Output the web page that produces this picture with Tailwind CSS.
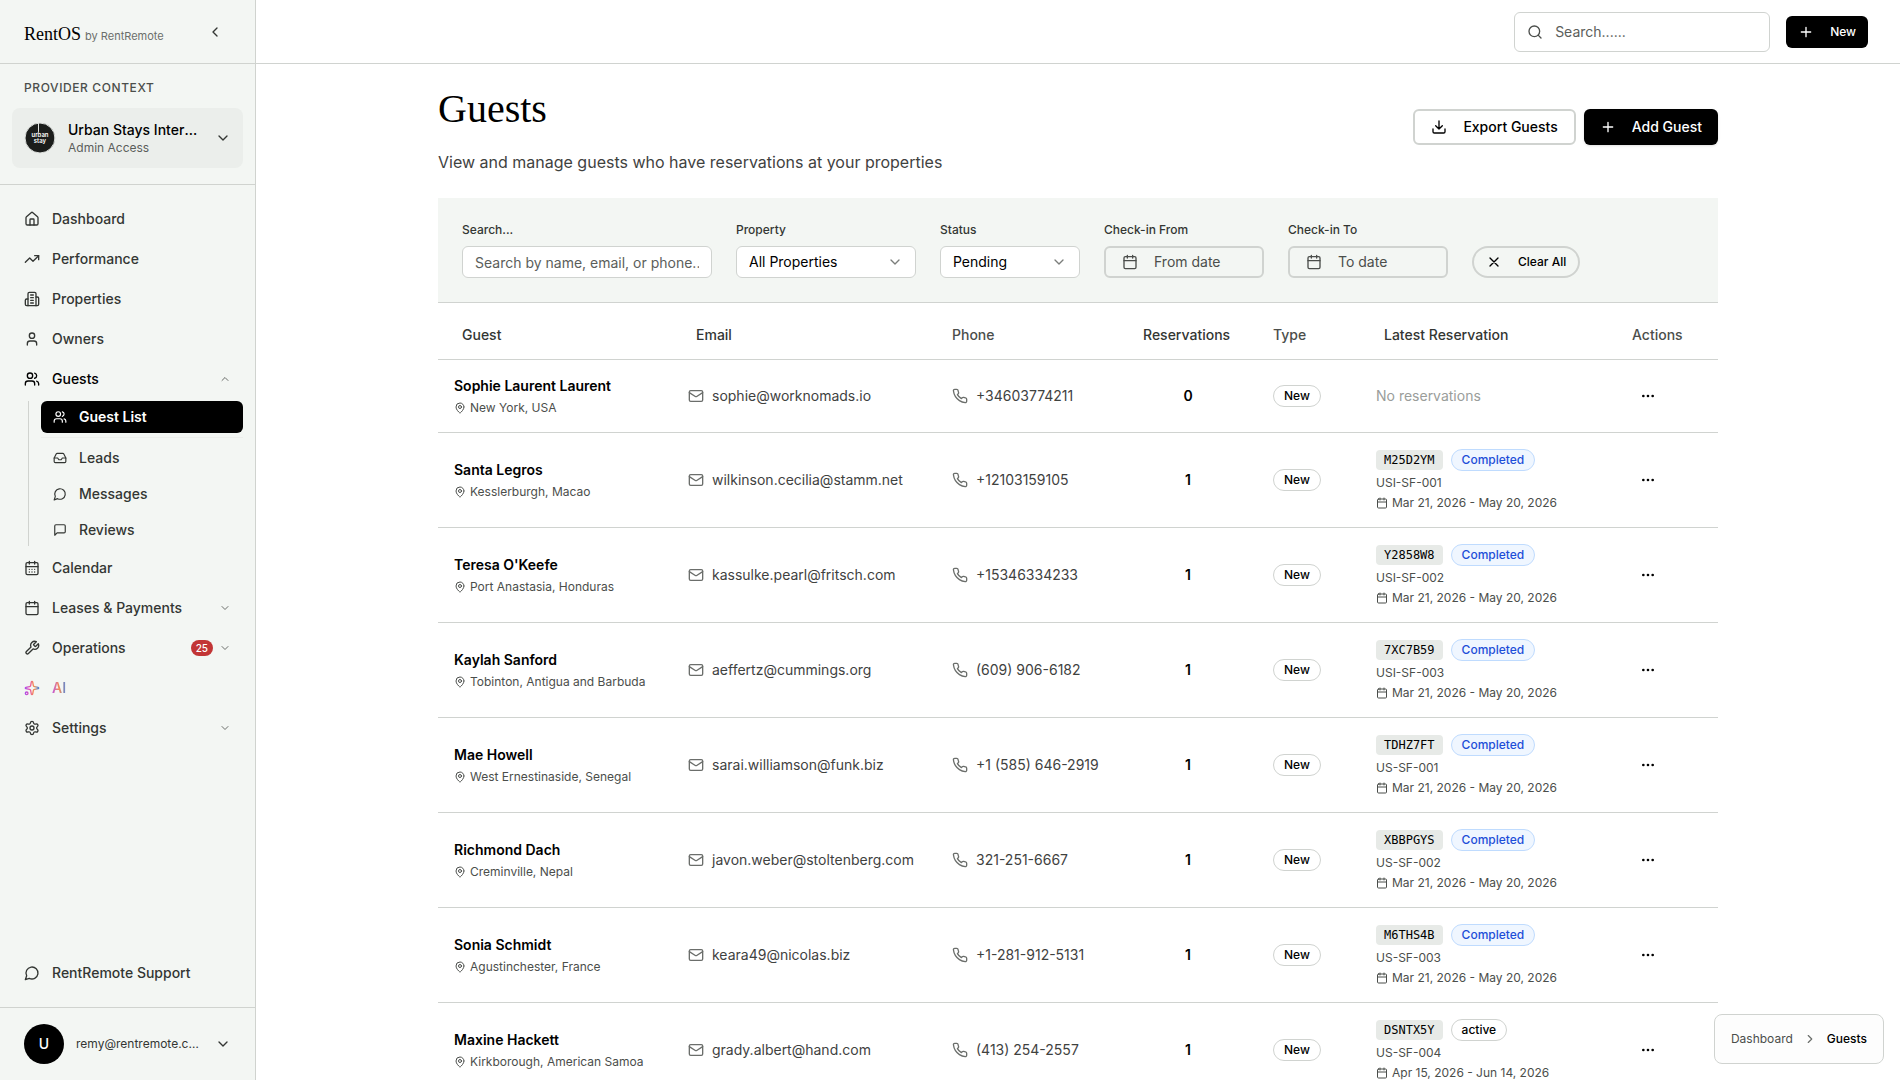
<!DOCTYPE html>
<html lang="en">
<head>
  <meta charset="UTF-8" />
  <meta name="viewport" content="width=device-width, initial-scale=1.0" />
  <title>Guests – RentOS</title>
  <script src="https://cdn.jsdelivr.net/npm/@tailwindcss/browser@4"></script>
</head>
<body class="flex h-screen overflow-hidden bg-white font-['Inter',sans-serif] text-sm text-black [stroke-linecap:round] [stroke-linejoin:round]">

  <!-- Icon sprite -->
  <svg class="hidden" xmlns="http://www.w3.org/2000/svg">
    <symbol id="chevron-left" viewBox="0 0 24 24"><path d="m15 18-6-6 6-6" /></symbol>
    <symbol id="chevron-right" viewBox="0 0 24 24"><path d="m9 18 6-6-6-6" /></symbol>
    <symbol id="chevron-down" viewBox="0 0 24 24"><path d="m6 9 6 6 6-6" /></symbol>
    <symbol id="chevron-up" viewBox="0 0 24 24"><path d="m18 15-6-6-6 6" /></symbol>
    <symbol id="house" viewBox="0 0 24 24"><path d="M15 21v-8a1 1 0 0 0-1-1h-4a1 1 0 0 0-1 1v8" /><path d="M3 10a2 2 0 0 1 .709-1.528l7-5.999a2 2 0 0 1 2.582 0l7 5.999A2 2 0 0 1 21 10v9a2 2 0 0 1-2 2H5a2 2 0 0 1-2-2z" /></symbol>
    <symbol id="trending-up" viewBox="0 0 24 24"><path d="M22 7l-8.5 8.5-5-5L2 17" /><path d="M16 7h6v6" /></symbol>
    <symbol id="building" viewBox="0 0 24 24"><path d="M6 22V4a2 2 0 0 1 2-2h8a2 2 0 0 1 2 2v18Z" /><path d="M6 12H4a2 2 0 0 0-2 2v6a2 2 0 0 0 2 2h2" /><path d="M18 9h2a2 2 0 0 1 2 2v9a2 2 0 0 1-2 2h-2" /><path d="M10 6h4M10 10h4M10 14h4M10 18h4" /></symbol>
    <symbol id="user" viewBox="0 0 24 24"><path d="M19 21v-2a4 4 0 0 0-4-4H9a4 4 0 0 0-4 4v2" /><circle cx="12" cy="7" r="4" /></symbol>
    <symbol id="users" viewBox="0 0 24 24"><path d="M16 21v-2a4 4 0 0 0-4-4H6a4 4 0 0 0-4 4v2" /><circle cx="9" cy="7" r="4" /><path d="M22 21v-2a4 4 0 0 0-3-3.87" /><path d="M16 3.13a4 4 0 0 1 0 7.75" /></symbol>
    <symbol id="inbox" viewBox="0 0 24 24"><path d="M22 12h-6l-2 3h-4l-2-3H2" /><path d="M5.45 5.11 2 12v6a2 2 0 0 0 2 2h16a2 2 0 0 0 2-2v-6l-3.45-6.89A2 2 0 0 0 16.76 4H7.24a2 2 0 0 0-1.79 1.11z" /></symbol>
    <symbol id="message-circle" viewBox="0 0 24 24"><path d="M7.9 20A9 9 0 1 0 4 16.1L2 22Z" /></symbol>
    <symbol id="message-square" viewBox="0 0 24 24"><path d="M21 15a2 2 0 0 1-2 2H7l-4 4V5a2 2 0 0 1 2-2h14a2 2 0 0 1 2 2z" /></symbol>
    <symbol id="calendar" viewBox="0 0 24 24"><path d="M8 2v4M16 2v4" /><rect width="18" height="18" x="3" y="4" rx="2" /><path d="M3 10h18" /></symbol>
    <symbol id="calendar-days" viewBox="0 0 24 24"><path d="M8 2v4M16 2v4" /><rect width="18" height="18" x="3" y="4" rx="2" /><path d="M3 10h18M8 14h.01M12 14h.01M16 14h.01M8 18h.01M12 18h.01M16 18h.01" /></symbol>
    <symbol id="wrench" viewBox="0 0 24 24"><path d="M14.7 6.3a1 1 0 0 0 0 1.4l1.6 1.6a1 1 0 0 0 1.4 0l3.77-3.77a6 6 0 0 1-7.94 7.94l-6.91 6.91a2.12 2.12 0 0 1-3-3l6.91-6.91a6 6 0 0 1 7.94-7.94l-3.76 3.76z" /></symbol>
    <symbol id="settings" viewBox="0 0 24 24"><path d="M9.671 4.136a2.34 2.34 0 0 1 4.659 0 2.34 2.34 0 0 0 3.319 1.915 2.34 2.34 0 0 1 2.33 4.033 2.34 2.34 0 0 0 0 3.831 2.34 2.34 0 0 1-2.33 4.033 2.34 2.34 0 0 0-3.319 1.915 2.34 2.34 0 0 1-4.659 0 2.34 2.34 0 0 0-3.32-1.915 2.34 2.34 0 0 1-2.33-4.033 2.34 2.34 0 0 0 0-3.831A2.34 2.34 0 0 1 6.35 6.051a2.34 2.34 0 0 0 3.319-1.915" /><circle cx="12" cy="12" r="3" /></symbol>
    <symbol id="search" viewBox="0 0 24 24"><circle cx="11" cy="11" r="8" /><path d="m21 21-4.3-4.3" /></symbol>
    <symbol id="plus" viewBox="0 0 24 24"><path d="M5 12h14M12 5v14" /></symbol>
    <symbol id="x" viewBox="0 0 24 24"><path d="M18 6 6 18M6 6l12 12" /></symbol>
    <symbol id="download" viewBox="0 0 24 24"><path d="M21 15v4a2 2 0 0 1-2 2H5a2 2 0 0 1-2-2v-4" /><path d="m7 10 5 5 5-5M12 15V3" /></symbol>
    <symbol id="mail" viewBox="0 0 24 24"><rect width="20" height="16" x="2" y="4" rx="2" /><path d="m22 7-8.97 5.7a1.94 1.94 0 0 1-2.06 0L2 7" /></symbol>
    <symbol id="phone" viewBox="0 0 24 24"><path d="M22 16.92v3a2 2 0 0 1-2.18 2 19.79 19.79 0 0 1-8.63-3.07 19.5 19.5 0 0 1-6-6 19.79 19.79 0 0 1-3.07-8.67A2 2 0 0 1 4.11 2h3a2 2 0 0 1 2 1.72 12.84 12.84 0 0 0 .7 2.81 2 2 0 0 1-.45 2.11L8.09 9.91a16 16 0 0 0 6 6l1.27-1.27a2 2 0 0 1 2.11-.45 12.84 12.84 0 0 0 2.81.7A2 2 0 0 1 22 16.92z" /></symbol>
    <symbol id="map-pin" viewBox="0 0 24 24"><path d="M20 10c0 4.993-5.539 10.193-7.399 11.799a1 1 0 0 1-1.202 0C9.539 20.193 4 14.993 4 10a8 8 0 0 1 16 0" /><circle cx="12" cy="10" r="3" /></symbol>
    <symbol id="ellipsis" viewBox="0 0 24 24"><circle cx="5" cy="12" r="1" /><circle cx="12" cy="12" r="1" /><circle cx="19" cy="12" r="1" /></symbol>
  </svg>

  <!-- Sidebar -->
  <aside class="flex w-64 shrink-0 flex-col border-r border-[#d0d3cf] bg-[#f3f6f3] text-[#333633]">
    <div class="flex h-16 shrink-0 items-center justify-between border-b border-[#d0d3cf] px-6">
      <a href="#" class="flex items-baseline gap-1 pt-1">
        <span class="font-['Liberation_Serif',serif] text-lg text-black">RentOS</span>
        <span class="text-[11px] text-[#6b6e6b]">by RentRemote</span>
      </a>
      <button aria-label="Collapse sidebar" class="flex size-8 items-center justify-center">
        <svg class="size-4 fill-none stroke-current stroke-2"><use href="#chevron-left" /></svg>
      </button>
    </div>

    <div class="border-b border-[#d0d3cf] px-3 pt-4 pb-4">
      <p class="px-3 text-xs font-medium tracking-wider text-[#4b4e4b] uppercase">Provider Context</p>
      <button class="mt-3 flex h-15 w-full items-center gap-3 rounded-lg bg-[#ebeeeb] px-3 text-left">
        <svg class="size-8 shrink-0" viewBox="0 0 32 32">
          <circle cx="16" cy="16" r="15" fill="#1b1d1b" stroke="#dcdfdc" />
          <path d="M14.500 1.500v8" stroke="#e4e6e4" />
          <text x="16" y="15" fill="#fff" font-size="6" font-weight="600" text-anchor="middle">urban</text>
          <text x="16" y="21" fill="#fff" font-size="6" font-weight="600" text-anchor="middle">stay</text>
        </svg>
        <span class="flex min-w-0 flex-1 flex-col">
          <span class="truncate text-sm leading-5 font-medium text-black">Urban Stays International</span>
          <span class="text-xs text-[#5b5e5b]">Admin Access</span>
        </span>
        <svg class="size-4 shrink-0 fill-none stroke-current stroke-2"><use href="#chevron-down" /></svg>
      </button>
    </div>

    <nav class="flex flex-1 flex-col gap-1 px-3 py-4 font-medium">
      <a href="#" class="flex h-9 items-center gap-3 px-3"><svg class="size-4 fill-none stroke-current stroke-2"><use href="#house" /></svg>Dashboard</a>
      <a href="#" class="flex h-9 items-center gap-3 px-3"><svg class="size-4 fill-none stroke-current stroke-2"><use href="#trending-up" /></svg>Performance</a>
      <a href="#" class="flex h-9 items-center gap-3 px-3"><svg class="size-4 fill-none stroke-current stroke-2"><use href="#building" /></svg>Properties</a>
      <a href="#" class="flex h-9 items-center gap-3 px-3"><svg class="size-4 fill-none stroke-current stroke-2"><use href="#user" /></svg>Owners</a>
      <button class="flex h-9 items-center gap-3 px-3 text-left text-black">
        <svg class="size-4 fill-none stroke-current stroke-2"><use href="#users" /></svg>
        <span class="flex-1">Guests</span>
        <svg class="size-3 fill-none stroke-[#6b6e6b] stroke-2"><use href="#chevron-up" /></svg>
      </button>
      <div class="ml-4 flex flex-col gap-1 border-l border-[#d0d3cf] pl-3">
        <a href="#" class="flex h-8 items-center gap-3 rounded-md bg-black px-3 font-semibold text-white"><svg class="size-3.5 fill-none stroke-current stroke-2"><use href="#users" /></svg>Guest List</a>
        <div class="h-px bg-[#eceeeb]"></div>
        <a href="#" class="flex h-8 items-center gap-3 px-3"><svg class="size-3.5 fill-none stroke-current stroke-2"><use href="#inbox" /></svg>Leads</a>
        <a href="#" class="flex h-8 items-center gap-3 px-3"><svg class="size-3.5 fill-none stroke-current stroke-2"><use href="#message-circle" /></svg>Messages</a>
        <a href="#" class="flex h-8 items-center gap-3 px-3"><svg class="size-3.5 fill-none stroke-current stroke-2"><use href="#message-square" /></svg>Reviews</a>
      </div>
      <a href="#" class="flex h-9 items-center gap-3 px-3"><svg class="size-4 fill-none stroke-current stroke-2"><use href="#calendar-days" /></svg>Calendar</a>
      <button class="flex h-9 items-center gap-3 px-3 text-left">
        <svg class="size-4 fill-none stroke-current stroke-2"><use href="#calendar" /></svg>
        <span class="flex-1">Leases &amp; Payments</span>
        <svg class="size-3 fill-none stroke-[#6b6e6b] stroke-2"><use href="#chevron-down" /></svg>
      </button>
      <button class="flex h-9 items-center gap-3 px-3 text-left">
        <svg class="size-4 fill-none stroke-current stroke-2"><use href="#wrench" /></svg>
        <span class="flex-1">Operations</span>
        <span class="flex items-center gap-1.5">
          <span class="rounded-full bg-[#c23535] px-[5px] text-[10px] leading-4 text-white">25</span>
          <svg class="size-3 fill-none stroke-[#6b6e6b] stroke-2"><use href="#chevron-down" /></svg>
        </span>
      </button>
      <a href="#" class="flex h-9 items-center gap-3 px-3">
        <svg class="size-4" viewBox="0 0 24 24" fill="none" stroke="url(#ai)" stroke-width="2">
          <defs>
            <linearGradient id="ai" gradientUnits="userSpaceOnUse" x1="2" y1="0" x2="22" y2="0">
              <stop offset="0" stop-color="#b04be8" />
              <stop offset=".35" stop-color="#e858a8" />
              <stop offset=".65" stop-color="#f59145" />
              <stop offset="1" stop-color="#4b82d8" />
            </linearGradient>
          </defs>
          <path d="M11.017 2.814a1 1 0 0 1 1.966 0l1.051 5.558a2 2 0 0 0 1.594 1.594l5.558 1.051a1 1 0 0 1 0 1.966l-5.558 1.051a2 2 0 0 0-1.594 1.594l-1.051 5.558a1 1 0 0 1-1.966 0l-1.051-5.558a2 2 0 0 0-1.594-1.594l-5.558-1.051a1 1 0 0 1 0-1.966l5.558-1.051a2 2 0 0 0 1.594-1.594z" />
          <circle cx="4" cy="20" r="2" />
        </svg>
        <span class="bg-linear-to-r from-[#c04be0] via-[#f5884a] to-[#4b82d8] bg-clip-text font-semibold text-transparent">AI</span>
      </a>
      <button class="flex h-9 items-center gap-3 px-3 text-left">
        <svg class="size-4 fill-none stroke-current stroke-2"><use href="#settings" /></svg>
        <span class="flex-1">Settings</span>
        <svg class="size-3 fill-none stroke-[#6b6e6b] stroke-2"><use href="#chevron-down" /></svg>
      </button>
      <a href="#" class="mt-auto flex h-9 items-center gap-3 px-3"><svg class="size-4 fill-none stroke-current stroke-2"><use href="#message-circle" /></svg>RentRemote Support</a>
    </nav>

    <div class="border-t border-[#d0d3cf] px-3 py-4">
      <button class="flex w-full items-center gap-3 px-3 text-left">
        <span class="flex size-10 shrink-0 items-center justify-center rounded-full bg-black font-medium text-white">U</span>
        <span class="min-w-0 flex-1 truncate text-xs">remy@rentremote.com</span>
        <svg class="size-4 shrink-0 fill-none stroke-current stroke-2"><use href="#chevron-down" /></svg>
      </button>
    </div>
  </aside>

  <div class="flex min-w-0 flex-1 flex-col">
    <!-- Top bar -->
    <header class="flex h-16 shrink-0 items-center justify-end gap-4 border-b border-[#d0d3d0] px-8">
      <label class="flex h-10 w-64 items-center gap-3 rounded-md border border-[#d0d3d0] px-3">
        <svg class="size-4 shrink-0 fill-none stroke-[#4b4e4b] stroke-2"><use href="#search" /></svg>
        <input type="text" aria-label="Search" placeholder="Search......" class="w-full min-w-0 outline-none placeholder:text-[#5b5e5b]" />
      </label>
      <button class="flex h-8 items-center gap-4 rounded-md bg-black px-3 text-xs font-medium text-white">
        <svg class="size-4 fill-none stroke-current stroke-2"><use href="#plus" /></svg>New
      </button>
    </header>

    <main class="flex-1 overflow-y-auto px-8 pt-4 [scrollbar-width:none]">
      <div class="mx-auto max-w-7xl">
        <div class="mb-6 flex items-center justify-between">
          <div>
            <h1 class="font-['Liberation_Serif',serif] text-[40px] leading-[58px]">Guests</h1>
            <p class="mt-3 text-base text-[#3f423f]">View and manage guests who have reservations at your properties</p>
          </div>
          <div class="flex gap-2 font-medium">
            <button class="flex h-9 items-center gap-4 rounded-md border-2 border-[#d0d3d0] px-4">
              <svg class="size-4 fill-none stroke-current stroke-2"><use href="#download" /></svg>Export Guests
            </button>
            <button class="flex h-9 items-center gap-4 rounded-md bg-black px-4 text-white shadow-sm">
              <svg class="size-4 fill-none stroke-current stroke-2"><use href="#plus" /></svg>Add Guest
            </button>
          </div>
        </div>

        <!-- Filters -->
        <div class="flex flex-wrap items-end gap-6 border-b border-[#d0d3d0] bg-[#f3f6f3] p-6">
          <div class="flex flex-col gap-2">
            <label for="guestSearch" class="text-xs font-medium text-[#333633]">Search...</label>
            <input id="guestSearch" type="text" placeholder="Search by name, email, or phone..." class="h-8 w-[250px] rounded-md border border-[#d0d3d0] bg-white px-3 outline-none placeholder:text-[#5b5e5b]" />
          </div>
          <div class="flex flex-col gap-2">
            <label for="property" class="text-xs font-medium text-[#333633]">Property</label>
            <div class="relative">
              <select id="property" class="h-8 w-[180px] appearance-none rounded-md border border-[#d0d3d0] bg-white px-3">
                <option>All Properties</option>
              </select>
              <svg class="pointer-events-none absolute top-2 right-[13px] size-4 fill-none stroke-[#7b7e7b] stroke-2"><use href="#chevron-down" /></svg>
            </div>
          </div>
          <div class="flex flex-col gap-2">
            <label for="status" class="text-xs font-medium text-[#333633]">Status</label>
            <div class="relative">
              <select id="status" class="h-8 w-[140px] appearance-none rounded-md border border-[#d0d3d0] bg-white px-3">
                <option>Pending</option>
              </select>
              <svg class="pointer-events-none absolute top-2 right-[13px] size-4 fill-none stroke-[#7b7e7b] stroke-2"><use href="#chevron-down" /></svg>
            </div>
          </div>
          <div class="flex flex-col gap-2">
            <label for="fromDate" class="text-xs font-medium text-[#333633]">Check-in From</label>
            <button id="fromDate" class="flex h-8 w-40 items-center gap-4 rounded-md border-2 border-[#d0d3d0] px-4 text-[#4b4e4b]">
              <svg class="size-4 fill-none stroke-current stroke-2"><use href="#calendar" /></svg>From date
            </button>
          </div>
          <div class="flex flex-col gap-2">
            <label for="toDate" class="text-xs font-medium text-[#333633]">Check-in To</label>
            <button id="toDate" class="flex h-8 w-40 items-center gap-4 rounded-md border-2 border-[#d0d3d0] px-4 text-[#4b4e4b]">
              <svg class="size-4 fill-none stroke-current stroke-2"><use href="#calendar" /></svg>To date
            </button>
          </div>
          <button class="flex h-8 items-center gap-4 rounded-full border-2 border-[#d0d3d0] px-3 text-xs font-medium">
            <svg class="size-4 fill-none stroke-current stroke-2"><use href="#x" /></svg>Clear All
          </button>
        </div>

        <!-- Guests table -->
        <table class="mt-2 w-full table-fixed border-separate border-spacing-0 text-left">
          <colgroup>
            <col class="w-[234px]" />
            <col class="w-[264px]" />
            <col class="w-[183px]" />
            <col class="w-[138px]" />
            <col class="w-[103px]" />
            <col class="w-[256px]" />
            <col class="w-[102px]" />
          </colgroup>
          <thead class="text-[#333633]">
            <tr>
              <th class="h-[49px] border-b border-[#d0d3d0] px-6 font-medium"><button>Guest</button></th>
              <th class="border-b border-[#d0d3d0] px-6 font-medium"><button>Email</button></th>
              <th class="border-b border-[#d0d3d0] px-4 font-medium text-[#4b4e4b]">Phone</th>
              <th class="border-b border-[#d0d3d0] px-6 font-medium"><button>Reservations</button></th>
              <th class="border-b border-[#d0d3d0] px-4 font-medium text-[#4b4e4b]">Type</th>
              <th class="border-b border-[#d0d3d0] px-6 font-medium"><button>Latest Reservation</button></th>
              <th class="border-b border-[#d0d3d0] px-4 font-medium text-[#4b4e4b]">Actions</th>
            </tr>
          </thead>
          <tbody id="guestRows"></tbody>
        </table>
      </div>
    </main>
  </div>

  <!-- Breadcrumb -->
  <nav class="fixed right-4 bottom-4 flex h-[50px] items-center gap-2.5 rounded-lg border border-[#d0d3d0] bg-[#fdfdfd] px-4 text-xs">
    <a href="#" class="text-[#4b4e4b]">Dashboard</a>
    <svg class="size-3.5 fill-none stroke-[#6b6e6b] stroke-2"><use href="#chevron-right" /></svg>
    <span class="font-medium">Guests</span>
  </nav>

  <script>
    const guests = [
      { name: "Sophie Laurent Laurent", place: "New York, USA", email: "sophie@worknomads.io", phone: "+34603774211" },
      { name: "Santa Legros", place: "Kesslerburgh, Macao", email: "wilkinson.cecilia@stamm.net", phone: "+12103159105", code: "M25D2YM", status: "Completed", unit: "USI-SF-001", dates: "Mar 21, 2026 - May 20, 2026" },
      { name: "Teresa O'Keefe", place: "Port Anastasia, Honduras", email: "kassulke.pearl@fritsch.com", phone: "+15346334233", code: "Y2858W8", status: "Completed", unit: "USI-SF-002", dates: "Mar 21, 2026 - May 20, 2026" },
      { name: "Kaylah Sanford", place: "Tobinton, Antigua and Barbuda", email: "aeffertz@cummings.org", phone: "(609) 906-6182", code: "7XC7B59", status: "Completed", unit: "USI-SF-003", dates: "Mar 21, 2026 - May 20, 2026" },
      { name: "Mae Howell", place: "West Ernestinaside, Senegal", email: "sarai.williamson@funk.biz", phone: "+1 (585) 646-2919", code: "TDHZ7FT", status: "Completed", unit: "US-SF-001", dates: "Mar 21, 2026 - May 20, 2026" },
      { name: "Richmond Dach", place: "Creminville, Nepal", email: "javon.weber@stoltenberg.com", phone: "321-251-6667", code: "XBBPGYS", status: "Completed", unit: "US-SF-002", dates: "Mar 21, 2026 - May 20, 2026" },
      { name: "Sonia Schmidt", place: "Agustinchester, France", email: "keara49@nicolas.biz", phone: "+1-281-912-5131", code: "M6THS4B", status: "Completed", unit: "US-SF-003", dates: "Mar 21, 2026 - May 20, 2026" },
      { name: "Maxine Hackett", place: "Kirkborough, American Samoa", email: "grady.albert@hand.com", phone: "(413) 254-2557", code: "DSNTX5Y", status: "active", unit: "US-SF-004", dates: "Apr 15, 2026 - Jun 14, 2026" },
    ];

    const statusColors = {
      Completed: "border-[#bfdbfe] bg-[#eff6ff] text-[#1d4ed8]",
      active: "border-[#d0d3d0] text-black",
    };

    function latestReservation(guest) {
      if (!guest.code) {
        return `<span class="text-[#9a9d9a]">No reservations</span>`;
      }
      return `
        <div class="flex flex-col gap-1 text-xs text-[#4b4e4b]">
          <div class="flex items-center gap-2">
            <code class="rounded-sm bg-[#e7eae7] px-2 font-['DejaVu_Sans_Mono',monospace] text-xs leading-5 text-black">${guest.code}</code>
            <span class="rounded-full border px-2.5 leading-5 font-medium ${statusColors[guest.status]}">${guest.status}</span>
          </div>
          <div>${guest.unit}</div>
          <div class="flex items-center gap-1">
            <svg class="size-3 fill-none stroke-current stroke-2"><use href="#calendar" /></svg>${guest.dates}
          </div>
        </div>`;
    }

    document.getElementById("guestRows").innerHTML = guests.map((guest) => `
      <tr>
        <td class="border-b border-[#d0d3d0] p-4">
          <div class="font-semibold whitespace-nowrap">${guest.name}</div>
          <div class="mt-1 flex items-center gap-1 text-xs whitespace-nowrap text-[#4b4e4b]">
            <svg class="size-3 shrink-0 fill-none stroke-current stroke-2"><use href="#map-pin" /></svg>${guest.place}
          </div>
        </td>
        <td class="border-b border-[#d0d3d0] p-4">
          <div class="flex items-center gap-2 text-[#3f423f]">
            <svg class="size-4 shrink-0 fill-none stroke-[#6b6e6b] stroke-2"><use href="#mail" /></svg>${guest.email}
          </div>
        </td>
        <td class="border-b border-[#d0d3d0] p-4">
          <div class="flex items-center gap-2 whitespace-nowrap text-[#3f423f]">
            <svg class="size-4 shrink-0 fill-none stroke-[#6b6e6b] stroke-2"><use href="#phone" /></svg>${guest.phone}
          </div>
        </td>
        <td class="border-b border-[#d0d3d0] p-4 text-center font-semibold">${guest.code ? 1 : 0}</td>
        <td class="border-b border-[#d0d3d0] px-4">
          <span class="inline-block rounded-full border border-[#d0d3d0] px-2.5 text-xs leading-5 font-medium">New</span>
        </td>
        <td class="border-b border-[#d0d3d0] p-4">${latestReservation(guest)}</td>
        <td class="border-b border-[#d0d3d0] px-4">
          <button aria-label="Actions for ${guest.name}" class="flex size-8 items-center justify-center">
            <svg class="size-4 fill-none stroke-current stroke-2"><use href="#ellipsis" /></svg>
          </button>
        </td>
      </tr>`).join("");
  </script>

</body>
</html>
